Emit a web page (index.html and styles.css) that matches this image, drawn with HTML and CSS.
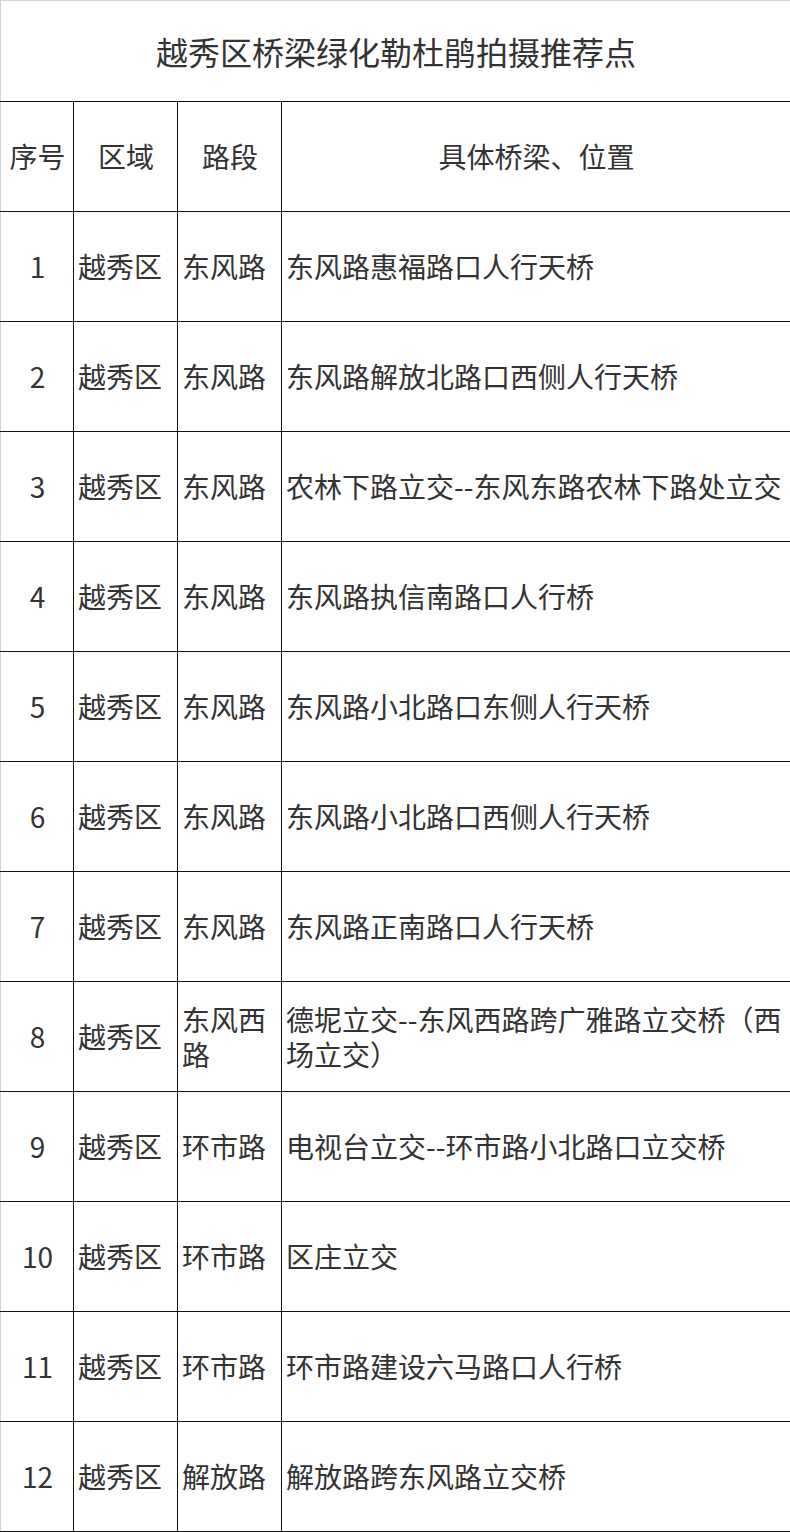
FILE: index.html
```html
<!DOCTYPE html>
<html lang="zh-CN">
<head>
<meta charset="utf-8">
<title>越秀区桥梁绿化勒杜鹃拍摄推荐点</title>
<link rel="stylesheet" href="styles.css">
</head>
<body>
<table class="sheet">
  <colgroup>
    <col class="c-no">
    <col class="c-area">
    <col class="c-road">
    <col class="c-place">
  </colgroup>
  <thead>
    <tr class="title-row"><th colspan="4" class="title">越秀区桥梁绿化勒杜鹃拍摄推荐点</th></tr>
    <tr class="head-row">
      <th class="center">序号</th>
      <th class="center">区域</th>
      <th class="center">路段</th>
      <th class="center">具体桥梁、位置</th>
    </tr>
  </thead>
  <tbody>
    <tr><td class="center">1</td><td>越秀区</td><td>东风路</td><td>东风路惠福路口人行天桥</td></tr>
    <tr><td class="center">2</td><td>越秀区</td><td>东风路</td><td>东风路解放北路口西侧人行天桥</td></tr>
    <tr><td class="center">3</td><td>越秀区</td><td>东风路</td><td>农林下路立交--东风东路农林下路处立交</td></tr>
    <tr><td class="center">4</td><td>越秀区</td><td>东风路</td><td>东风路执信南路口人行桥</td></tr>
    <tr><td class="center">5</td><td>越秀区</td><td>东风路</td><td>东风路小北路口东侧人行天桥</td></tr>
    <tr><td class="center">6</td><td>越秀区</td><td>东风路</td><td>东风路小北路口西侧人行天桥</td></tr>
    <tr><td class="center">7</td><td>越秀区</td><td>东风路</td><td>东风路正南路口人行天桥</td></tr>
    <tr><td class="center">8</td><td>越秀区</td><td>东风西路</td><td>德坭立交--东风西路跨广雅路立交桥（西场立交）</td></tr>
    <tr><td class="center">9</td><td>越秀区</td><td>环市路</td><td>电视台立交--环市路小北路口立交桥</td></tr>
    <tr><td class="center">10</td><td>越秀区</td><td>环市路</td><td>区庄立交</td></tr>
    <tr><td class="center">11</td><td>越秀区</td><td>环市路</td><td>环市路建设六马路口人行桥</td></tr>
    <tr><td class="center">12</td><td>越秀区</td><td>解放路</td><td>解放路跨东风路立交桥</td></tr>
  </tbody>
</table>
</body>
</html>
```
FILE: styles.css
```css
html, body {
  margin: 0;
  padding: 0;
  background: #ffffff;
}

.sheet {
  width: 790px;
  border-collapse: collapse;
  table-layout: fixed;
  font-family: "Noto Sans CJK SC", "Microsoft YaHei", sans-serif;
  color: #333333;
  font-size: 28px;
  line-height: 35px;
}

.c-no { width: 73px; }
.c-area { width: 104px; }
.c-road { width: 104px; }
.c-place { width: 509px; }

.sheet th,
.sheet td {
  border: 1px solid #111111;
  padding: 0 3px 0 4px;
  font-weight: normal;
  vertical-align: middle;
  text-align: left;
  height: 109px;
  box-sizing: border-box;
}

.sheet th:first-child,
.sheet td:first-child {
  border-left-color: #d4d4d4;
}

.sheet .center {
  text-align: center;
}

.title-row .title {
  height: 101px;
  font-size: 32px;
  text-align: center;
  border-top-color: #d4d4d4;
}

.head-row th {
  height: 110px;
}

.sheet tbody td {
  height: 110px;
}
```
